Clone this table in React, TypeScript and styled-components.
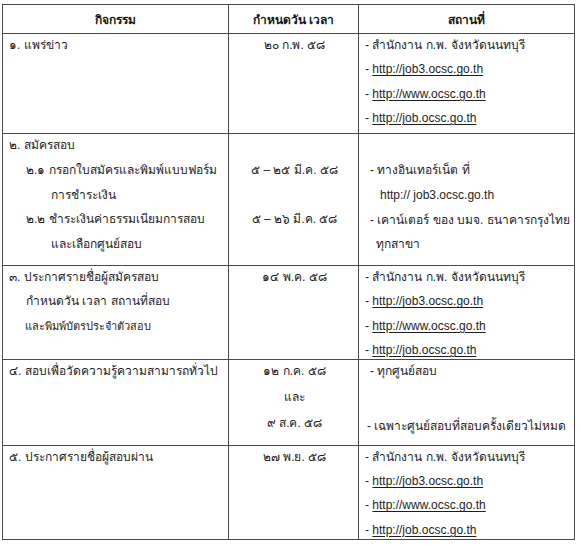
import React from "react";
import styled, { createGlobalStyle } from "styled-components";

const Global = createGlobalStyle`
  html, body { margin: 0; padding: 0; background: #ffffff; }
  body {
    font-family: "Liberation Sans", "Noto Sans", sans-serif;
    color: #1e1e1e;
  }
`;

const Page = styled.div`
  padding: 4px 0 0 2px;
  width: 580px;
  height: 545px;
  box-sizing: border-box;
  overflow: hidden;
`;

const Table = styled.table`
  border-collapse: collapse;
  table-layout: fixed;
  width: 572px;
  font-size: 12px;
`;

const Col = styled.col<{ $w: number }>`
  width: ${(p) => p.$w}px;
`;

const Row = styled.tr<{ $h: number }>`
  height: ${(p) => p.$h}px;
`;

const HeadCell = styled.th`
  border: 1px solid #4a4a4a;
  font-weight: 700;
  text-align: center;
  vertical-align: middle;
  padding: 0;
  font-size: 12px;
  color: #151515;
`;

const Cell = styled.td<{ $align?: "left" | "center" }>`
  border: 1px solid #4a4a4a;
  vertical-align: top;
  text-align: ${(p) => p.$align ?? "left"};
  padding: 3px 4px 0 6px;
`;

const Stack = styled.div<{ $gap?: number }>`
  display: flex;
  flex-direction: column;
  gap: ${(p) => p.$gap ?? 7.3}px;
`;

const Line = styled.div<{ $indent?: number; $small?: boolean; $top?: number }>`
  line-height: 17px;
  height: 17px;
  padding-left: ${(p) => p.$indent ?? 0}px;
  margin-top: ${(p) => p.$top ?? 0}px;
  font-size: ${(p) => (p.$small ? 11 : 12)}px;
  white-space: nowrap;
`;

const Link = styled.span`
  text-decoration: underline;
  text-decoration-thickness: 1px;
  text-underline-offset: 2px;
`;

const links = ["http://job3.ocsc.go.th", "http://www.ocsc.go.th", "http://job.ocsc.go.th"];

const Places: React.FC = () => (
  <Stack>
    <Line>- สำนักงาน ก.พ. จังหวัดนนทบุรี</Line>
    {links.map((l) => (
      <Line key={l}>
        - <Link>{l}</Link>
      </Line>
    ))}
  </Stack>
);

export default function App() {
  return (
    <Page>
      <Global />
      <Table>
        <colgroup>
          <Col $w={226} />
          <Col $w={130} />
          <Col $w={216} />
        </colgroup>
        <thead>
          <Row $h={29}>
            <HeadCell>กิจกรรม</HeadCell>
            <HeadCell>กำหนดวัน เวลา</HeadCell>
            <HeadCell>สถานที่</HeadCell>
          </Row>
        </thead>
        <tbody>
          <Row $h={100}>
            <Cell>
              <Line>๑. แพร่ข่าว</Line>
            </Cell>
            <Cell $align="center">
              <Line>๒๐ ก.พ. ๕๘</Line>
            </Cell>
            <Cell>
              <Places />
            </Cell>
          </Row>
          <Row $h={132}>
            <Cell>
              <Stack $gap={7.8}>
                <Line>๒. สมัครสอบ</Line>
                <Line $indent={17}>๒.๑ กรอกใบสมัครและพิมพ์แบบฟอร์ม</Line>
                <Line $indent={42}>การชำระเงิน</Line>
                <Line $indent={17}>๒.๒ ชำระเงินค่าธรรมเนียมการสอบ</Line>
                <Line $indent={42}>และเลือกศูนย์สอบ</Line>
              </Stack>
            </Cell>
            <Cell $align="center">
              <Stack $gap={32}>
                <Line $top={25}>๕ – ๒๕ มี.ค. ๕๘</Line>
                <Line>๕ – ๒๖ มี.ค. ๕๘</Line>
              </Stack>
            </Cell>
            <Cell>
              <Stack $gap={7.8}>
                <Line $indent={5} $top={25}>- ทางอินเทอร์เน็ต ที่</Line>
                <Line $indent={15}>http:// job3.ocsc.go.th</Line>
                <Line $indent={5}>- เคาน์เตอร์ ของ บมจ. ธนาคารกรุงไทย</Line>
                <Line $indent={11}>ทุกสาขา</Line>
              </Stack>
            </Cell>
          </Row>
          <Row $h={92}>
            <Cell>
              <Stack $gap={7.4}>
                <Line>๓. ประกาศรายชื่อผู้สมัครสอบ</Line>
                <Line $indent={17}>กำหนดวัน เวลา สถานที่สอบ</Line>
                <Line $indent={16} $small>และพิมพ์บัตรประจำตัวสอบ</Line>
              </Stack>
            </Cell>
            <Cell $align="center">
              <Line>๑๔ พ.ค. ๕๘</Line>
            </Cell>
            <Cell>
              <Places />
            </Cell>
          </Row>
          <Row $h={86}>
            <Cell>
              <Line>๔. สอบเพื่อวัดความรู้ความสามารถทั่วไป</Line>
            </Cell>
            <Cell $align="center">
              <Stack $gap={9}>
                <Line>๑๒ ก.ค. ๕๘</Line>
                <Line>และ</Line>
                <Line>๙ ส.ค. ๕๘</Line>
              </Stack>
            </Cell>
            <Cell>
              <Stack $gap={38}>
                <Line $indent={5}>- ทุกศูนย์สอบ</Line>
                <Line $indent={2}>- เฉพาะศูนย์สอบที่สอบครั้งเดียวไม่หมด</Line>
              </Stack>
            </Cell>
          </Row>
          <Row $h={94}>
            <Cell>
              <Line>๕. ประกาศรายชื่อผู้สอบผ่าน</Line>
            </Cell>
            <Cell $align="center">
              <Line>๒๗ พ.ย. ๕๘</Line>
            </Cell>
            <Cell>
              <Places />
            </Cell>
          </Row>
        </tbody>
      </Table>
    </Page>
  );
}
